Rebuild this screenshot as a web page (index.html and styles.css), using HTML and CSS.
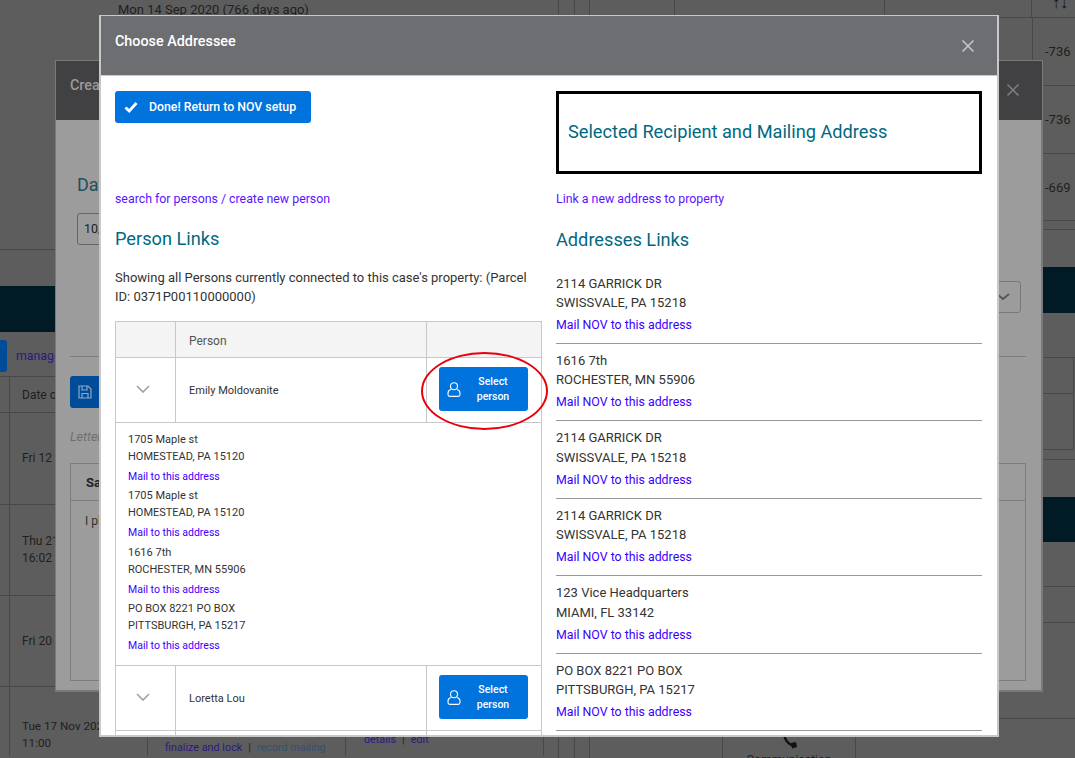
FILE: index.html
```html
<!DOCTYPE html>
<html lang="en">
<head>
    <meta charset="UTF-8">
    <title>Choose Addressee</title>
    <link rel="stylesheet" href="styles.css">
</head>
<body>

<!-- page behind the dialogs -->
<div class="page">
    <div class="page-left">
        <div class="case-date">Mon 14 Sep 2020 (766 days ago)</div>
        <div class="band"></div>
        <div class="toolbar">
            <span class="tool-btn"></span>
            <a class="dim-link manage-link">manage</a>
        </div>
        <div class="ev-row ev-head"><div class="ev-cell">Date of</div></div>
        <div class="ev-row ev-a"><div class="ev-cell">Fri 12 Mar</div></div>
        <div class="ev-row ev-b"><div class="ev-cell">Thu 21 Jan<br>16:02</div></div>
        <div class="ev-row ev-b"><div class="ev-cell">Fri 20 Nov</div></div>
        <div class="ev-last">
            <div class="ev-cell ev-date">Tue 17 Nov 2020<br>11:00</div>
            <div class="ev-cell ev-finalize">
                <a class="dim-link">finalize and lock</a><span class="pipe">|</span><a class="dim-link muted">record mailing</a>
            </div>
            <div class="ev-cell ev-details">
                <a class="dim-link">details</a><span class="pipe">|</span><a class="dim-link">edit</a>
            </div>
        </div>
    </div>

    <div class="page-right">
        <div class="r-top">
            <span class="r-c1"></span><span class="r-c2"></span><span class="r-c3"></span><span class="r-c4"></span><span class="r-c5"></span><span class="r-c5"></span>
            <span class="r-c6 sort-arrows">↑↓</span>
        </div>
        <div class="r-row r-68"><span class="r-num first">-736</span></div>
        <div class="r-row r-68"><span class="r-num">-736</span></div>
        <div class="r-row r-67"><span class="r-num">-669</span></div>
        <div class="r-row r-9"></div>
        <div class="r-gap-37"></div>
        <div class="band"></div>
        <div class="r-row r-45"></div>
        <div class="r-row r-36 split"></div>
        <div class="r-row r-56 split"></div>
        <div class="r-row r-10"></div>
        <div class="r-gap-37"></div>
        <div class="band short"></div>
        <div class="r-row r-45"></div>
        <div class="r-row r-36"></div>
        <div class="r-row r-96"></div>
        <div class="r-bottom">
            <span class="r-c1"></span><span class="r-c2"></span><span class="r-c3"></span>
            <span class="r-c4b"></span>
            <span class="r-c5b">
                <svg width="15" height="15" viewBox="0 0 15 15"><path d="M2 0C3 6 6 10 11 11.500" fill="none" stroke="#111" stroke-width="2.400"/><path d="M9 9l5-1 1 5-5 1.500z" fill="#111"/></svg>
                <span class="comm-label">Communication</span>
            </span>
        </div>
    </div>
</div>

<!-- first dialog, mostly covered -->
<div class="dialog back-dialog">
    <div class="back-header">
        <span class="back-title">Create</span>
        <svg class="close-x" width="14" height="14" viewBox="0 0 14 14"><path d="M1.500 1.500l11 11M12.500 1.500l-11 11" stroke="#7f7f7f" stroke-width="1.500" fill="none"/></svg>
    </div>
    <div class="back-body">
        <h3 class="back-heading">Date</h3>
        <div class="back-input">10/</div>
        <div class="back-select">
            <svg width="14" height="8" viewBox="0 0 14 8"><path d="M1 1l6 5 6-5" fill="none" stroke="#555" stroke-width="1.800"/></svg>
        </div>
        <div class="back-rule"></div>
        <div class="back-save">
            <svg width="14" height="14" viewBox="0 0 14 14" fill="none" stroke="#8fa6c6" stroke-width="1.200"><path d="M1 1h9l3 3v9H1z"/><path d="M4 1v4h5V1M4 13V8.500h6V13"/></svg>
        </div>
        <div class="back-note">Letter</div>
        <div class="back-table">
            <div class="back-table-head">Saved</div>
            <div class="back-table-text">I plan</div>
        </div>
    </div>
</div>

<!-- top dialog -->
<div class="dialog addressee-dialog">
    <div class="dialog-header">
        <span class="dialog-title">Choose Addressee</span>
        <svg class="close-x" width="14" height="14" viewBox="0 0 14 14"><path d="M1.500 1.500l11 11M12.500 1.500l-11 11" stroke="#c8c9cb" stroke-width="1.500" fill="none"/></svg>
    </div>
    <div class="dialog-body">
        <div class="column">
            <div class="top-block">
                <button class="btn done-btn" type="button">
                    <svg width="14" height="12" viewBox="0 0 14 12"><path d="M1.500 6.500l3.700 3.500 7.300-8" fill="none" stroke="#fff" stroke-width="2.800"/></svg>
                    <span>Done! Return to NOV setup</span>
                </button>
            </div>
            <a class="top-link">search for persons / create new person</a>
            <h3 class="section-title">Person Links</h3>
            <p class="intro">Showing all Persons currently connected to this case's property: (Parcel ID: 0371P00110000000)</p>

            <table class="person-table">
                <thead>
                    <tr><th class="col-toggle"></th><th class="col-name">Person</th><th class="col-action"></th></tr>
                </thead>
                <tbody>
                    <tr class="person-row">
                        <td class="toggle"><svg width="14" height="8" viewBox="0 0 14 8"><path d="M1 1l6 6 6-6" fill="none" stroke="#a3a3a3" stroke-width="1.700"/></svg></td>
                        <td>Emily Moldovanite</td>
                        <td class="action">
                            <button class="btn select-btn" type="button">
                                <svg width="14" height="15" viewBox="0 0 14 15" fill="none" stroke="#fff" stroke-width="1.100"><circle cx="7" cy="4.200" r="3.500"/><path d="M3.800 7.600C2 8.200 1 9.600 1 11.200V12.500c0 1 .8 1.900 1.900 1.900h8.200c1.100 0 1.900-.9 1.900-1.900v-1.300c0-1.600-1-3-2.800-3.600"/></svg>
                                <span>Select person</span>
                            </button>
                        </td>
                    </tr>
                    <tr>
                        <td class="expanded" colspan="3">
                            <div class="person-address">1705 Maple st<br>HOMESTEAD, PA 15120<a>Mail to this address</a></div>
                            <div class="person-address">1705 Maple st<br>HOMESTEAD, PA 15120<a>Mail to this address</a></div>
                            <div class="person-address">1616 7th<br>ROCHESTER, MN 55906<a>Mail to this address</a></div>
                            <div class="person-address">PO BOX 8221 PO BOX<br>PITTSBURGH, PA 15217<a>Mail to this address</a></div>
                        </td>
                    </tr>
                    <tr class="person-row">
                        <td class="toggle"><svg width="14" height="8" viewBox="0 0 14 8"><path d="M1 1l6 6 6-6" fill="none" stroke="#a3a3a3" stroke-width="1.700"/></svg></td>
                        <td>Loretta Lou</td>
                        <td class="action">
                            <button class="btn select-btn" type="button">
                                <svg width="14" height="15" viewBox="0 0 14 15" fill="none" stroke="#fff" stroke-width="1.100"><circle cx="7" cy="4.200" r="3.500"/><path d="M3.800 7.600C2 8.200 1 9.600 1 11.200V12.500c0 1 .8 1.900 1.900 1.900h8.200c1.100 0 1.900-.9 1.900-1.900v-1.300c0-1.600-1-3-2.800-3.600"/></svg>
                                <span>Select person</span>
                            </button>
                        </td>
                    </tr>
                    <tr class="person-row"><td></td><td></td><td></td></tr>
                </tbody>
            </table>
        </div>

        <div class="column">
            <div class="top-block selected-box"><span>Selected Recipient and Mailing Address</span></div>
            <a class="top-link">Link a new address to property</a>
            <h3 class="section-title address-title">Addresses Links</h3>
            <div class="address">2114 GARRICK DR<br>SWISSVALE, PA 15218<a>Mail NOV to this address</a></div>
            <div class="address">1616 7th<br>ROCHESTER, MN 55906<a>Mail NOV to this address</a></div>
            <div class="address">2114 GARRICK DR<br>SWISSVALE, PA 15218<a>Mail NOV to this address</a></div>
            <div class="address">2114 GARRICK DR<br>SWISSVALE, PA 15218<a>Mail NOV to this address</a></div>
            <div class="address">123 Vice Headquarters<br>MIAMI, FL 33142<a>Mail NOV to this address</a></div>
            <div class="address">PO BOX 8221 PO BOX<br>PITTSBURGH, PA 15217<a>Mail NOV to this address</a></div>
            <div class="address">2114 GARRICK DR<br>SWISSVALE, PA 15218<a>Mail NOV to this address</a></div>
        </div>
    </div>
    <div class="red-circle"></div>
</div>

</body>
</html>
```

FILE: styles.css
```css
html, body {
    margin: 0;
    padding: 0;
    height: 100%;
    overflow: hidden;
}
body {
    font-family: 'Roboto', sans-serif;
    background-color: #5d5d5d;
    color: #333;
    position: relative;
}
a {
    cursor: pointer;
}

/* page behind */
.page {
    display: flex;
    height: 758px;
    color: #1f1f1f;
    font-size: 13px;
}
.page-left {
    width: 540px;
    flex: none;
}
.page-right {
    flex: 1;
}
.case-date {
    height: 250px;
    padding: 1px 0 0 118px;
    box-sizing: border-box;
    line-height: 17px;
    border-bottom: 1px solid #484848;
    margin-bottom: 36px;
}
.band {
    height: 46px;
    background-color: #001b26;
}
.band.short {
    height: 45px;
}
.toolbar {
    height: 45px;
    box-sizing: border-box;
    padding: 8px 0 5px;
    display: flex;
    gap: 9px;
    align-items: center;
    border-bottom: 1px solid #484848;
}
.tool-btn {
    width: 7px;
    height: 32px;
    background-color: #004c99;
    border-radius: 0 3px 3px 0;
}
.dim-link {
    color: #2a1a80;
    font-size: 10.800px;
}
.manage-link {
    font-size: 12.350px;
}
.dim-link.muted {
    color: #34506e;
}
.pipe {
    color: #222;
    margin: 0 6px;
    font-size: 11px;
}
.ev-row {
    border-bottom: 1px solid #484848;
    display: flex;
}
.ev-head {
    height: 35px;
}
.ev-a {
    height: 91px;
}
.ev-b {
    height: 90px;
}
.ev-cell {
    margin-left: 9px;
    border-left: 1px solid #484848;
    padding-left: 12px;
    display: flex;
    align-items: center;
    font-size: 12px;
    line-height: 17px;
}
.ev-row .ev-cell {
    display: block;
    align-self: stretch;
}
.ev-head .ev-cell {
    line-height: 36px;
}
.ev-a .ev-cell,
.ev-b .ev-cell {
    display: flex;
    align-items: center;
}
.ev-last {
    display: grid;
    grid-template-columns: 9px 139px 198px 198px;
    height: 69px;
}
.ev-date {
    grid-column: 2;
    margin: 0;
    padding: 31px 0 0 12px;
    display: block;
    font-size: 11.700px;
    border-right: 1px solid #484848;
    white-space: nowrap;
}
.ev-finalize {
    margin: 0;
    border-left: none;
    border-right: 1px solid #484848;
    padding: 53px 0 0 17px;
    align-items: flex-start;
    line-height: 15px;
    white-space: nowrap;
}
.ev-details {
    margin: 0;
    border-left: none;
    border-right: 1px solid #484848;
    padding: 45px 0 0 18px;
    align-items: flex-start;
    line-height: 15px;
    white-space: nowrap;
}
.r-top {
    height: 18px;
    box-sizing: border-box;
    border-bottom: 1px solid #484848;
    display: grid;
    grid-template-columns: 19px 16px 15px 85px 210px 147px 43px;
}
.r-top span {
    border-right: 1px solid #484848;
}
.r-top .r-c6 {
    border-right: none;
    font-size: 16px;
    line-height: 6px;
    padding-left: 20px;
    color: #111;
    overflow: hidden;
}
.r-row {
    box-sizing: border-box;
    border-bottom: 1px solid #484848;
    display: flex;
    justify-content: flex-end;
    align-items: center;
}
.r-row.split {
    border-right: 1px solid #484848;
    margin-right: 1px;
}
.r-68 {
    height: 68px;
}
.r-67 {
    height: 67px;
}
.r-9 {
    height: 9px;
}
.r-10 {
    height: 10px;
}
.r-45 {
    height: 45px;
}
.r-36 {
    height: 36px;
}
.r-56 {
    height: 56px;
}
.r-96 {
    height: 96px;
}
.r-gap-37 {
    height: 37px;
}
.r-num {
    width: 30px;
}
.r-num.first {
    width: 43px;
    box-sizing: border-box;
    padding-left: 12px;
    align-self: stretch;
    display: flex;
    align-items: center;
    border-left: 1px solid #484848;
}
.r-bottom {
    display: grid;
    grid-template-columns: 19px 16px 15px 133px 133px;
    height: 39px;
}
.r-bottom > span {
    border-right: 1px solid #484848;
}
.r-c5b {
    display: flex;
    flex-direction: column;
    align-items: center;
    padding-top: 15px;
    box-sizing: border-box;
    overflow: hidden;
}
.r-c5b svg {
    flex: none;
}
.comm-label {
    flex: none;
    margin-top: 4px;
    line-height: 15px;
    font-size: 12px;
}

/* dialogs */
.dialog {
    position: absolute;
    box-sizing: border-box;
}
.close-x {
    flex: none;
}
.back-dialog {
    left: 55px;
    top: 60px;
    width: 988px;
    height: 632px;
    background-color: #9c9c9c;
    border: 1px solid #7a7a7a;
    border-right-width: 2px;
    border-bottom-width: 2px;
}
.back-header {
    height: 59px;
    padding: 0 22px 0 14px;
    display: flex;
    justify-content: space-between;
    align-items: center;
    background-color: #414144;
    margin-right: -1px;
}
.back-title {
    color: #9a9a9a;
    font-size: 14.350px;
    font-weight: 500;
    margin-top: -10px;
}
.back-header .close-x {
    margin-top: -2px;
}
.back-body {
    padding: 0 15px 0 14px;
}
.back-heading {
    margin: 54px 0 0 7px;
    font-size: 18px;
    font-weight: 400;
    line-height: 21px;
    color: #1f5060;
}
.back-input {
    margin: 18px 0 0 7px;
    width: 200px;
    height: 32px;
    box-sizing: border-box;
    border: 1px solid #666;
    border-radius: 3px;
    padding-left: 6px;
    line-height: 30px;
    font-size: 12.500px;
    color: #222;
}
.back-select {
    margin: 36px 5px 0 auto;
    width: 100px;
    height: 32px;
    box-sizing: border-box;
    border: 1px solid #777;
    border-radius: 3px;
    display: flex;
    justify-content: flex-end;
    align-items: center;
    padding-right: 10px;
}
.back-rule {
    margin-top: 43px;
    border-top: 1px solid #7c7c7c;
}
.back-save {
    margin-top: 19px;
    width: 80px;
    height: 32px;
    background-color: #004c99;
    border-radius: 3px;
    display: flex;
    align-items: center;
    padding-left: 8px;
    box-sizing: border-box;
}
.back-note {
    margin-top: 21px;
    font-style: italic;
    font-size: 12.500px;
    color: #6f6f6f;
    line-height: 16px;
}
.back-table {
    margin-top: 18px;
    height: 218px;
    box-sizing: border-box;
    border: 1px solid #7c7c7c;
}
.back-table-head {
    height: 36px;
    line-height: 38px;
    padding-left: 15px;
    font-size: 13px;
    font-weight: 700;
    color: #222;
    border-bottom: 1px solid #7c7c7c;
}
.back-table-text {
    padding: 13px 0 0 14px;
    font-size: 12px;
    color: #333;
}
.addressee-dialog {
    left: 99px;
    top: 15px;
    width: 900px;
    height: 722px;
    background-color: #fff;
    border: 2px solid #c8c8c8;
    border-top-width: 1px;
    overflow: hidden;
}
.dialog-header {
    height: 59px;
    padding: 0 23px 0 14px;
    display: flex;
    justify-content: space-between;
    align-items: center;
    background-color: #6c6e72;
    border-bottom: 1px solid #c8c8c8;
    margin: 0 -1px;
}
.dialog-title {
    color: #fff;
    font-size: 14.350px;
    font-weight: 500;
    margin-top: -9px;
    margin-left: 1px;
}
.dialog-header .close-x {
    margin-top: 1px;
}
.dialog-body {
    display: grid;
    grid-template-columns: 427px 426px;
    gap: 14px;
    padding: 15px 0 0 14px;
    height: 659px;
    box-sizing: border-box;
    overflow: hidden;
}
.column {
    min-width: 0;
}
.top-block {
    height: 83px;
    box-sizing: border-box;
}
.btn {
    background-color: #0073dd;
    color: #fff;
    border: none;
    border-radius: 3px;
    font-family: inherit;
    cursor: pointer;
    display: flex;
    align-items: center;
    padding: 0;
}
.done-btn {
    width: 196px;
    height: 32px;
    padding-left: 9px;
    gap: 11px;
    font-size: 12.300px;
    font-weight: 500;
}
.selected-box {
    border: 3px solid #000;
    padding: 0 0 3px 9px;
    display: flex;
    align-items: center;
    font-size: 18.200px;
    color: #00697f;
}
.top-link {
    display: block;
    margin-top: 18px;
    font-size: 12.350px;
    line-height: 15px;
    color: #5a14ff;
}
.section-title {
    margin: 21px 0 0;
    font-size: 18.200px;
    font-weight: 400;
    line-height: 22px;
    color: #00697f;
}
.address-title {
    margin-top: 22px;
    margin-bottom: 15.600px;
}
.intro {
    margin: 18px 0 15px;
    font-size: 13px;
    line-height: 19px;
    color: #333;
}
.person-table {
    width: 427px;
    border-collapse: collapse;
    table-layout: fixed;
    font-size: 11px;
    color: #333;
}
.person-table th,
.person-table td {
    border: 1px solid #c8c8c8;
    padding: 0 13px;
    text-align: left;
}
.person-table th {
    height: 36px;
    background-color: #f4f4f4;
    font-size: 12px;
    font-weight: 400;
    color: #555;
    padding-top: 3px;
    box-sizing: border-box;
}
.col-toggle {
    width: 60px;
}
.col-action {
    width: 115px;
}
.person-row td {
    height: 65px;
    box-sizing: border-box;
}
.person-table .toggle {
    padding: 0 0 2px 20px;
}
.toggle svg {
    display: block;
}
.person-table .action {
    padding: 0 0 2px 12px;
}
.select-btn {
    width: 89px;
    height: 44px;
    padding: 0 3px 0 8px;
    font-size: 10.500px;
    font-weight: 500;
    line-height: 15px;
}
.select-btn span {
    flex: 1;
    padding: 0 10px;
    text-align: center;
}
.person-table .expanded {
    padding: 8px 12px 9px;
    line-height: 17px;
}
.person-address {
    height: 56.300px;
}
.person-address a {
    display: block;
    margin-top: 4px;
    line-height: 15px;
    font-size: 10.500px;
    color: #3a00ff;
}
.address {
    padding: 7px 0 9.900px;
    border-bottom: 1px solid #999;
    font-size: 13px;
    line-height: 19.500px;
    color: #333;
}
.address a {
    display: block;
    margin-top: 5.500px;
    font-size: 12.350px;
    line-height: 15px;
    color: #3a00ff;
}
.red-circle {
    position: absolute;
    left: 320px;
    top: 336px;
    width: 127px;
    height: 78px;
    box-sizing: border-box;
    border: 2px solid #e8000b;
    border-radius: 50%;
}
```
